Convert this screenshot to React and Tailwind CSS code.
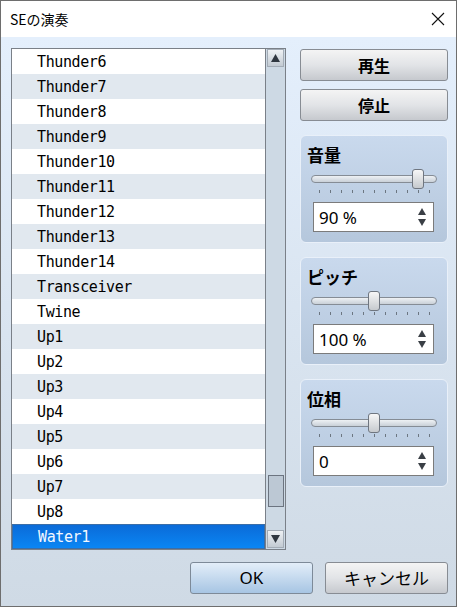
import React from "react";

const sounds = [
  "Thunder6", "Thunder7", "Thunder8", "Thunder9", "Thunder10", "Thunder11",
  "Thunder12", "Thunder13", "Thunder14", "Transceiver", "Twine",
  "Up1", "Up2", "Up3", "Up4", "Up5", "Up6", "Up7", "Up8", "Water1",
];

function Tri({ up, w = 9, h = 8, color = "#2f3740" }) {
  return (
    <svg width={w} height={h} viewBox={`0 0 ${w} ${h}`}>
      {up ? (
        <polygon points={`0,${h} ${w},${h} ${w / 2},0`} fill={color} />
      ) : (
        <polygon points={`0,0 ${w},0 ${w / 2},${h}`} fill={color} />
      )}
    </svg>
  );
}

function PushButton({ children, className = "" }) {
  return (
    <div
      className={
        "flex items-center justify-center h-[32px] rounded-[3px] border border-[#878c93] bg-linear-to-b from-[#f4f4f4] via-[#e2e4e7] to-[#c6c9ce] text-[16px] font-bold text-black " +
        className
      }
    >
      {children}
    </div>
  );
}

function SliderGroup({ label, value, pos }) {
  const thumbLeft = 8 + pos * 110 - 6;
  return (
    <div className="mt-[14px] w-[148px] h-[108px] rounded-[6px] border border-[#e9f0f9] bg-linear-to-b from-[#c9d9ed] to-[#b5c7dc] pt-[9px] pl-[6px]">
      <div className="h-[20px] leading-[20px] text-[17px] font-bold text-black">{label}</div>
      <div className="relative mt-[4px] ml-[4px] w-[126px] h-[20px] flex items-center">
        <div className="w-full h-[8px] rounded-full border border-[#858c95] bg-linear-to-b from-[#eef1f4] to-[#c9d0d8]" />
        <div
          className="absolute top-0 w-[12px] h-[20px] rounded-[3px] border border-[#6f7680] bg-linear-to-b from-[#f7f7f7] to-[#c6cace]"
          style={{ left: thumbLeft }}
        />
      </div>
      <div className="mt-[1px] ml-[12px] w-[111px] h-[4px] flex justify-between">
        {Array.from({ length: 11 }).map((_, i) => (
          <div key={i} className="w-[1px] h-[3px] bg-[#6c7681]" />
        ))}
      </div>
      <div className="mt-[8px] ml-[6px] w-[121px] h-[30px] border border-[#7b7b7b] bg-white flex items-center justify-between pl-[5px] pr-[7px]">
        <span className="font-['Noto_Sans',sans-serif] text-[17px] text-black leading-none">{value}</span>
        <div className="flex flex-col gap-[4px]">
          <Tri up w={8} h={7} color="#3a3f45" />
          <Tri w={8} h={7} color="#3a3f45" />
        </div>
      </div>
    </div>
  );
}

export default function App() {
  return (
    <div className="w-[460px] h-[607px] flex bg-white font-['Noto_Sans_CJK_JP',sans-serif]">
      <div className="w-[457px] h-full flex flex-col border border-[#6e6e6e]">
        {/* title bar */}
        <div className="h-[36px] bg-white flex items-center justify-between pl-[9px] pr-[10px]">
          <span className="text-[14px] text-black">SEの演奏</span>
          <svg width="14" height="14" viewBox="0 0 14 14" className="mr-[1px]">
            <path d="M1 1 L13 13 M13 1 L1 13" stroke="#111" strokeWidth="1.1" />
          </svg>
        </div>

        {/* client area */}
        <div className="flex-1 bg-linear-to-b from-[#e4effc] to-[#cfdae5] pl-[10px] pr-[8px] pt-[11px]">
          <div className="flex">
            {/* sound list */}
            <div className="w-[275px] h-[502px] border border-[#7a8088] bg-white flex">
              <div className="w-[253px] flex flex-col font-['DejaVu_Sans_Mono',monospace] text-[15px] tracking-[-0.4px]">
                {sounds.map((s, i) => {
                  const selected = s === "Water1";
                  return (
                    <div
                      key={s}
                      className={
                        "h-[25px] flex items-center pl-[25px] pt-[2px] " +
                        (selected
                          ? "bg-linear-to-b from-[#0b6bd8] to-[#0a86f4] border border-[#3a6ea8] text-[#f2f8ff]"
                          : i % 2 === 1
                          ? "bg-[#e1e8ef] text-black"
                          : "bg-white text-black")
                      }
                    >
                      {s}
                    </div>
                  );
                })}
              </div>
              <div className="w-[20px] border-l border-[#7a8088] bg-[#cdd9e4] flex flex-col px-[1px]">
                <div className="h-[18px] border border-[#a3acb6] bg-linear-to-b from-[#eef1f4] to-[#c3cbd3] flex items-center justify-center">
                  <Tri up w={9} h={8} />
                </div>
                <div className="flex-1">
                  <div className="mt-[408px] ml-[1px] w-[16px] h-[32px] border border-[#6c7480] bg-[#bcc8d4]" />
                </div>
                <div className="h-[18px] mb-[1px] border border-[#a3acb6] bg-linear-to-b from-[#eef1f4] to-[#c3cbd3] flex items-center justify-center">
                  <Tri w={9} h={8} />
                </div>
              </div>
            </div>

            {/* controls */}
            <div className="ml-[14px] w-[148px] flex flex-col mt-[1px]">
              <PushButton>再生</PushButton>
              <PushButton className="mt-[8px]">停止</PushButton>
              <SliderGroup label="音量" value="90 %" pos={0.9} />
              <SliderGroup label="ピッチ" value="100 %" pos={0.5} />
              <SliderGroup label="位相" value="0" pos={0.5} />
            </div>
          </div>

          {/* dialog buttons */}
          <div className="mt-[12px] flex justify-end gap-[12px]">
            <div className="w-[123px] h-[32px] rounded-[3px] border border-[#7d8a98] bg-linear-to-b from-[#e3eef9] to-[#a7c5e3] flex items-center justify-center font-['Noto_Sans',sans-serif] text-[17px] text-black">
              OK
            </div>
            <div className="w-[123px] h-[32px] rounded-[3px] border border-[#878c93] bg-linear-to-b from-[#f4f4f4] via-[#e2e4e7] to-[#c6c9ce] flex items-center justify-center text-[17px] text-black">
              キャンセル
            </div>
          </div>
        </div>
      </div>
    </div>
  );
}
